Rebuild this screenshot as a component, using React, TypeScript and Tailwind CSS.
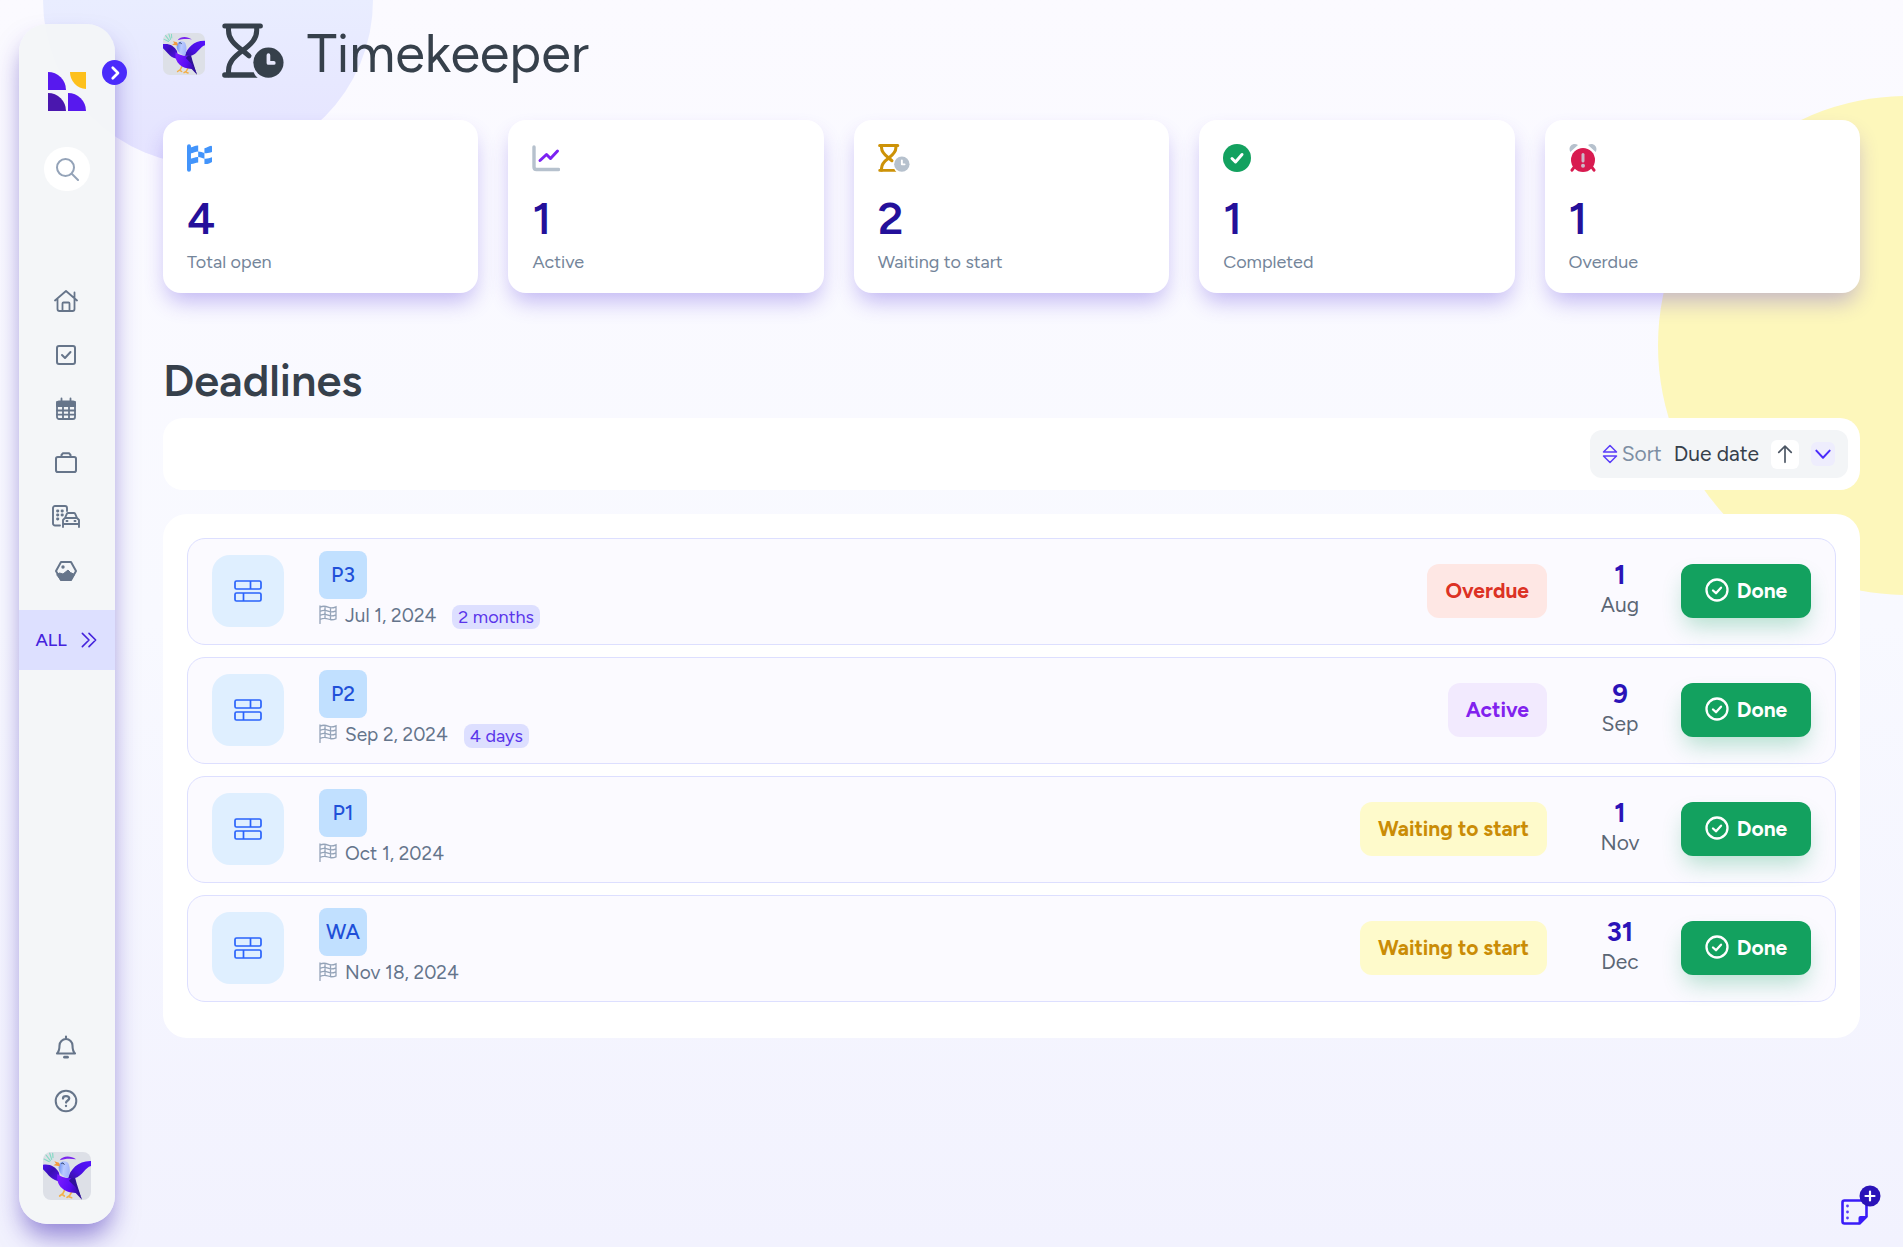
import type { ReactNode } from "react";

function Bird({ className }: { className: string }) {
  return (
    <svg viewBox="0 0 144 144" className={className} role="img" aria-label="Workspace bird">
      <defs>
        <linearGradient id="leftWing" x1="0" y1="0" x2="1" y2="1">
          <stop offset="0" stopColor="#4a10ee" />
          <stop offset="0.45" stopColor="#3a10b4" />
          <stop offset="1" stopColor="#5512f2" />
        </linearGradient>
        <linearGradient id="rightWing" x1="0" y1="1" x2="1" y2="0">
          <stop offset="0" stopColor="#33109e" />
          <stop offset="0.4" stopColor="#4a10e0" />
          <stop offset="1" stopColor="#5512ff" />
        </linearGradient>
        <linearGradient id="belly" x1="0" y1="0.2" x2="1" y2="0.6">
          <stop offset="0" stopColor="#7a1cff" />
          <stop offset="0.55" stopColor="#5a0cf5" />
          <stop offset="1" stopColor="#2b0f8f" />
        </linearGradient>
        <linearGradient id="head" x1="0" y1="0.4" x2="1" y2="0.6">
          <stop offset="0" stopColor="#6f93f4" />
          <stop offset="0.45" stopColor="#b9caff" />
          <stop offset="1" stopColor="#9fb2fb" />
        </linearGradient>
        <clipPath id="tile">
          <rect width="144" height="144" rx="24" />
        </clipPath>
      </defs>
      <g clipPath="url(#tile)">
        <rect width="144" height="144" fill="#dde0e7" />
        <g stroke="#6fd8bd" strokeWidth="3.500" strokeLinecap="round">
          <path d="M20 3l6 19M9 9l13 17M3 21l16 8M29 4l1 13" opacity=".8" />
        </g>
        <path d="M64 116l-6 12M58 126l-8 6M58 128l6 4M86 120l-8 14M78 132l-6 4M78 134l8 3" stroke="#f2b04c" strokeWidth="5" strokeLinecap="round" fill="none" />
        <path d="M0 38C22 35 38 44 48 62L52 88C28 88 16 68 0 52z" fill="url(#leftWing)" />
        <path d="M43 66C52 74 66 78 76 78L94 78C98 98 108 120 117 143L98 123C66 122 38 104 43 66z" fill="url(#belly)" />
        <path d="M88 76L78 86L98 106L117 143C110 122 102 100 96 76z" fill="#2f1299" />
        <path d="M74 78C84 52 104 26 144 27V42C126 46 120 72 94 79z" fill="url(#rightWing)" />
        <path d="M48 38C54 26 72 24 77 36C82 48 82 64 76 78C60 76 42 60 48 38z" fill="url(#head)" />
        <path d="M50 25C60 10 84 11 99 22C82 19 64 20 50 25z" fill="#7a26ee" />
        <path d="M34 28L48 32L51 43L31 40L39 35z" fill="#f39a3d" />
        <path d="M55 35c3-3 7-2 9 3" stroke="#26365f" strokeWidth="3" fill="none" />
      </g>
    </svg>
  );
}

function Logo() {
  return (
    <svg viewBox="0 0 38 39" className="h-[39px] w-[38px]" role="img" aria-label="Home logo">
      <path d="M0 0A18 18 0 0 1 18 18H0z" fill="#5719ee" />
      <path d="M22 0H38V17A17 17 0 0 1 22 0z" fill="#fdc01c" />
      <path d="M0 21A18 18 0 0 1 18 39H0z" fill="#4a17ae" />
      <path d="M20 21A18 18 0 0 1 38 39H20z" fill="#5719ee" />
    </svg>
  );
}

function Hourglass({ className, glass, clock, hand, width }: { className: string; glass: string; clock: string; hand: string; width: number }) {
  return (
    <svg viewBox="0 0 184 164" className={className} aria-hidden="true">
      <g fill="none" stroke={glass} strokeWidth={width} strokeLinecap="round" strokeLinejoin="round">
        <path d="M8 9H114M19 9V22C19 46 34 62 61 82C88 62 103 46 103 22V9" />
        <path d="M19 154V142C19 118 34 102 61 82L80 98" />
      </g>
      <path d="M8 147H94Q97 156 106 163H8Q0 163 0 155T8 147z" fill={glass} />
      <circle cx="138" cy="118" r="45" fill={clock} />
      <path d="M138 96V119H154" fill="none" stroke={hand} strokeWidth="11" strokeLinecap="round" strokeLinejoin="round" />
    </svg>
  );
}

function Line({ children, className = "size-6", width = 2 }: { children: ReactNode; className?: string; width?: number }) {
  return (
    <svg viewBox="0 0 24 24" className={className} fill="none" stroke="currentColor" strokeWidth={width} strokeLinecap="round" strokeLinejoin="round" aria-hidden="true">
      {children}
    </svg>
  );
}

const nav: { label: string; icon: ReactNode }[] = [
  {
    label: "Home",
    icon: <Line width={1.8}><path d="M1 11.500L12 2l11 9.500M3.500 9.500V20a2 2 0 0 0 2 2h13a2 2 0 0 0 2-2V3.500M8.500 22v-7.500a1 1 0 0 1 1-1h5a1 1 0 0 1 1 1V22" /></Line>,
  },
  {
    label: "Tasks",
    icon: <Line><rect x="3" y="3" width="18" height="18" rx="2" /><path d="M8 12l3 3 5.500-6" /></Line>,
  },
  {
    label: "Calendar",
    icon: (
      <Line width={1.8}>
        <rect x="3" y="4.500" width="18" height="17.500" rx="2" />
        <path d="M3 5h18v4H3z" fill="currentColor" />
        <path d="M7.500 1.500V5M16.500 1.500V5M9 9v13M15 9v13M3 13.500h18M3 17.700h18" />
      </Line>
    ),
  },
  {
    label: "Cases",
    icon: <Line><rect x="2" y="6" width="20" height="15" rx="1.800" /><path d="M7.500 6V4l1.500-1.800h6l1.500 1.800v2" /></Line>,
  },
  {
    label: "Assets",
    icon: (
      <svg viewBox="0 0 28 24" className="h-6 w-7" fill="none" stroke="currentColor" strokeWidth="1.900" strokeLinejoin="round" strokeLinecap="round" aria-hidden="true">
        <path d="M8 20.500H3a2 2 0 0 1-2-2V3a2 2 0 0 1 2-2h10a2 2 0 0 1 2 2v3M11 21v-6l2-2h12l2 2v7M11 19h16M13 13l1.800-4.200q.4-.8 1.400-.8h5.600q1 0 1.400.8L25 13M14.500 16h1M22.500 16h1M11 21v1" />
        <path d="M5.500 6h.4M10 6h.4M5.500 10h.4M10 10h.4M5.500 14h.4" strokeWidth="2.800" />
      </svg>
    ),
  },
  {
    label: "Media",
    icon: (
      <Line>
        <path d="M7 3h10L22 12l-5 9H7L2 12z" />
        <path d="M3 15.500l2.500-1.500 3.500 1 5-4 2.500 2.500 4 2L17 21H7z" fill="currentColor" strokeWidth="1" />
        <circle cx="9" cy="8" r="1" fill="currentColor" strokeWidth="1.400" />
      </Line>
    ),
  },
];

function Sidebar() {
  return (
    <aside className="sticky top-0 z-10 h-screen shrink-0 pt-6 pb-[23px]">
      <div className="relative flex h-full w-24 flex-col items-center rounded-[28px] bg-[#f3f5f8]/95 pt-12 pb-6 shadow-[0_16px_26px_-4px_rgba(63,38,180,0.550)]">
        <button aria-label="Expand sidebar" className="absolute top-9 -right-3 flex size-[25px] items-center justify-center rounded-full bg-[#4a2bfb] text-white">
          <Line className="size-[18px]" width={3.6}><path d="M9 5l7 7-7 7" /></Line>
        </button>
        <Logo />
        <button aria-label="Search" className="mt-9 flex h-11 w-[46px] items-center justify-center rounded-full bg-white text-[#94a3b8]">
          <Line><circle cx="10.500" cy="10.500" r="8.500" /><path d="M17 17l6 6" /></Line>
        </button>
        <nav className="mt-[83px] flex w-full flex-col items-center">
          {nav.map((n) => (
            <a key={n.label} href="#" aria-label={n.label} className="flex h-[54px] w-full items-center justify-center pr-0.5 text-[#66758a]">
              {n.icon}
            </a>
          ))}
          <a href="#" className="mt-3 flex h-[60px] w-full items-center justify-center gap-3 bg-[#dde0ff] text-lg font-medium text-[#4423dc]">
            ALL
            <Line className="size-5" width={1.9}><path d="M4 4l8 8-8 8M12 4l8 8-8 8" /></Line>
          </a>
        </nav>
        <div className="mt-auto flex flex-col items-center">
          <button aria-label="Notifications" className="flex h-[54px] items-center pr-0.5 text-[#66758a]">
            <Line className="size-6" width={2.1}>
              <path d="M12 1.500v2M3 18.500h18c-2-2-2.500-4-2.500-8a6.500 6.500 0 0 0-13 0c0 4-.5 6-2.500 8z" />
              <path d="M10.500 22.200h3" strokeWidth="2.800" />
            </Line>
          </button>
          <button aria-label="Help" className="flex h-[54px] items-center pr-0.5 text-[#66758a]">
            <Line className="size-6">
              <circle cx="12" cy="12" r="10.300" />
              <path d="M9 9.500c0-1.400 1.200-2.300 3-2.300s3.200.9 3.200 2.400c0 1.800-3.100 1.900-3.100 4M12 16.800v.2" strokeWidth="2.300" />
            </Line>
          </button>
          <a href="#" aria-label="Profile" className="mt-6">
            <Bird className="size-12" />
          </a>
        </div>
      </div>
    </aside>
  );
}

const stats: { value: number; label: string; icon: ReactNode }[] = [
  {
    value: 4,
    label: "Total open",
    icon: (
      <svg viewBox="0 0 76 84" className="h-7 w-[25px]" fill="#4294fb" aria-hidden="true">
        <rect width="12" height="84" rx="6" />
        <path d="M10 10C20 8 26 3 34 4V22C26 22 20 27 10 28zM10 44C20 42 26 38 34 39V56C26 56 20 61 10 60zM34 22C42 22 46 25 53 27V44C46 43 42 39 34 39zM53 12C60 11 66 7 73 5Q76 5 76 8V24C68 26 62 29 53 27zM53 44C62 45 68 42 76 40V54C70 58 62 61 53 60z" />
      </svg>
    ),
  },
  {
    value: 1,
    label: "Active",
    icon: (
      <svg viewBox="0 0 28 28" className="size-7" fill="none" strokeLinecap="round" strokeLinejoin="round" aria-hidden="true">
        <path d="M2 3V23Q2 25.500 4.500 25.500H26.500" stroke="#b6c1cd" strokeWidth="3.400" />
        <path d="M8 16.500L14.500 10.500L18.500 14.500L25.500 7" stroke="#7c22f2" strokeWidth="3" />
      </svg>
    ),
  },
  { value: 2, label: "Waiting to start", icon: <Hourglass className="h-7 w-8" glass="#cd9207" clock="#b6c1cd" hand="#ffffff" width={18} /> },
  {
    value: 1,
    label: "Completed",
    icon: (
      <svg viewBox="0 0 28 28" className="size-7" fill="none" aria-hidden="true">
        <circle cx="14" cy="14" r="14" fill="#13a15f" />
        <path d="M9 14.500l3.500 3.500L19 10.500" stroke="#fff" strokeWidth="3" strokeLinecap="round" strokeLinejoin="round" />
      </svg>
    ),
  },
  {
    value: 1,
    label: "Overdue",
    icon: (
      <svg viewBox="0 0 28 28" className="size-7" fill="none" strokeLinecap="round" aria-hidden="true">
        <path d="M1.300 8C-1.500 2.500 4-2 9 1zM26.700 8C29.500 2.500 24-2 19 1z" fill="#b6c1cd" />
        <path d="M6 22l-3 4.200M22 22l3 4.200" stroke="#d81b50" strokeWidth="3" />
        <circle cx="14" cy="16" r="12" fill="#d81b50" />
        <path d="M14 10.500v6.500" stroke="#cdb9c8" strokeWidth="3" />
        <circle cx="14" cy="21.700" r="2" fill="#cdb9c8" />
      </svg>
    ),
  },
];

const overdue = "bg-[#fee7e4] text-[#dc3224]";
const active = "bg-[#f2eafe] text-[#8122ee]";
const waiting = "bg-[#fefacb] text-[#ca8c06]";

const deadlines = [
  { code: "P3", start: "Jul 1, 2024", left: "2 months", status: "Overdue", tone: overdue, day: 1, month: "Aug" },
  { code: "P2", start: "Sep 2, 2024", left: "4 days", status: "Active", tone: active, day: 9, month: "Sep" },
  { code: "P1", start: "Oct 1, 2024", left: "", status: "Waiting to start", tone: waiting, day: 1, month: "Nov" },
  { code: "WA", start: "Nov 18, 2024", left: "", status: "Waiting to start", tone: waiting, day: 31, month: "Dec" },
];

function FlagIcon() {
  return (
    <svg viewBox="0 0 18 19" className="mb-1 h-[19px] w-[18px]" fill="none" stroke="#94a3b8" strokeWidth="1.300" strokeLinecap="round" aria-hidden="true">
      <path d="M1 .8V18.500M1 2.200C4 .8 6.500 1 9 2.200S14 3.200 17 1.800V13.800C14 15.200 11.500 15 9 14S4 13 1 14.500M1 6.300C4 5 6.500 5 9 6.200S14 7.200 17 5.800M1 10.300C4 9 6.500 9 9 10.200S14 11.200 17 9.800M6 1.300V13.300M11.500 2.800V14.800" />
    </svg>
  );
}

export default function App() {
  return (
    <div className="relative min-h-screen overflow-clip bg-linear-to-b from-[#fbfaff] via-[#f8f9ff] to-[#f2f2fe] font-[Figtree,Lato,sans-serif] text-[#36404b]">
      <div className="absolute -top-[165px] left-[43px] size-[330px] rounded-full bg-linear-to-b from-[#e9edff] from-50% to-[#e5e3ff]" />
      <div className="absolute top-24 -right-[254px] size-[499px] rounded-full bg-[#fdf7bb]" />

      <div className="relative flex pl-[19px]">
        <Sidebar />

        <main className="min-w-0 flex-1 pr-[43px] pl-12">
          <header className="flex h-[120px] items-center pb-3">
            <Bird className="size-[42px]" />
            <Hourglass className="mb-2 ml-[17px] h-[55px] w-[62px]" glass="#36404b" clock="#36404b" hand="#e7e8fd" width={15} />
            <h1 className="ml-[23px] text-[54px] leading-none">Timekeeper</h1>
          </header>

          <section aria-label="Summary" className="grid grid-cols-5 gap-[30px]">
            {stats.map((s) => (
              <div key={s.label} className="rounded-[18px] bg-white px-6 pt-6 pb-[21px] shadow-[0_12px_22px_-4px_rgba(79,45,220,0.330)]">
                {s.icon}
                <p className="mt-5 text-[45px] leading-[52px] font-semibold text-[#24109a]">{s.value}</p>
                <p className="mt-2 text-lg leading-5 text-[#74859a]">{s.label}</p>
              </div>
            ))}
          </section>

          <h2 className="mt-[60px] text-[45px] leading-[54px] font-semibold">Deadlines</h2>

          <div className="mt-[11px] flex justify-end rounded-[20px] bg-white p-3">
            <div className="flex h-12 items-center rounded-xl bg-[#f3f5f7] pr-3 pl-3 text-[21px]">
              <svg viewBox="0 0 16 20" className="h-5 w-4" fill="none" stroke="#5a3df8" strokeWidth="1.500" strokeLinejoin="round" aria-hidden="true">
                <path d="M8 1.500L14.500 8H1.500zM8 18.500L14.500 12H1.500z" />
              </svg>
              <span className="ml-1 text-[#7d8ea3]">Sort</span>
              <button className="ml-3">Due date</button>
              <button aria-label="Ascending" className="ml-3 flex h-[29px] w-7 items-center justify-center rounded-md bg-white text-[#4b5563]">
                <Line className="size-5" width={2}><path d="M12 22V2.500M4.500 10L12 2.500l7.500 7.500" /></Line>
              </button>
              <button aria-label="Sort options" className="mr-px ml-3 flex size-6 items-center justify-center rounded-md bg-[#eeedfd] text-[#4a2bfb]">
                <Line className="size-5" width={2.4}><path d="M4 8l8 8.500L20 8" /></Line>
              </button>
            </div>
          </div>

          <ul className="mt-6 flex flex-col gap-3 rounded-[24px] bg-white px-6 pt-6 pb-9">
            {deadlines.map((d) => (
              <li key={d.code} className="flex h-[107px] items-center rounded-[18px] border border-[#dddfff] bg-[#fbfaff] px-6 pb-0.5">
                <div className="flex size-[72px] items-center justify-center rounded-[18px] bg-[#dfefff]">
                  <svg viewBox="0 0 28 22" className="h-[22px] w-7" fill="none" stroke="#2a63fb" strokeWidth="1.700" aria-hidden="true">
                    <rect x="1" y="1" width="26" height="8" rx="1.500" />
                    <rect x="1" y="13" width="26" height="8" rx="1.500" />
                    <path d="M16.500 1v8M9.500 13v8" />
                  </svg>
                </div>
                <div className="ml-[35px] flex flex-1 flex-col items-start">
                  <span className="flex size-12 items-center justify-center rounded-lg bg-[#c1e0ff] text-[21px] font-medium text-[#1f50d8]">{d.code}</span>
                  <div className="mt-1 flex h-7 items-center">
                    <FlagIcon />
                    <span className="ml-2 text-[19px] text-[#64748b]">{d.start}</span>
                    {d.left && <span className="ml-4 rounded-lg bg-[#dddfff] px-1.5 text-lg leading-6 text-[#5a35ea]">{d.left}</span>}
                  </div>
                </div>
                <span className={`flex h-[54px] items-center rounded-xl px-[18px] text-[21px] font-bold ${d.tone}`}>{d.status}</span>
                <div className="mr-[30px] ml-[42px] w-[62px] pb-1 text-center">
                  <p className="text-[27px] leading-8 font-bold text-[#2b13b8]">{d.day}</p>
                  <p className="text-[21px] leading-7 text-[#5b6675]">{d.month}</p>
                </div>
                <button className="flex h-[54px] w-[130px] items-center justify-center gap-2 rounded-xl bg-[#13a15f] text-[21px] font-bold text-white shadow-[0_12px_22px_-4px_rgba(19,161,95,0.300)]">
                  <Line className="mb-0.5 size-6" width={2.3}><circle cx="12" cy="12" r="10.500" /><path d="M8 12.500l3 2.700 5-5.500" /></Line>
                  Done
                </button>
              </li>
            ))}
          </ul>
        </main>
      </div>

      <button aria-label="Add note" className="fixed right-[22px] bottom-5 z-20">
        <svg viewBox="0 0 40 42" className="h-[42px] w-10" fill="none" aria-hidden="true">
          <path d="M3.500 15.500H25.500V31.500L18.500 38.500H3.500Q1.500 38.500 1.500 36.500V17.500Q1.500 15.500 3.500 15.500z" stroke="#3a1cf8" strokeWidth="2.600" strokeLinejoin="round" />
          <path d="M17.500 39.500V33Q17.500 31 19.500 31H26.500z" fill="#3a1cf8" />
          <g fill="#5a3df8"><circle cx="6.500" cy="21" r="1.400" /><circle cx="6.500" cy="27" r="1.400" /><circle cx="6.500" cy="33" r="1.400" /></g>
          <circle cx="29" cy="11" r="10.500" fill="#2b13b8" />
          <path d="M29 6.500v9M24.500 11h9" stroke="#fff" strokeWidth="2.200" strokeLinecap="round" />
        </svg>
      </button>
    </div>
  );
}
